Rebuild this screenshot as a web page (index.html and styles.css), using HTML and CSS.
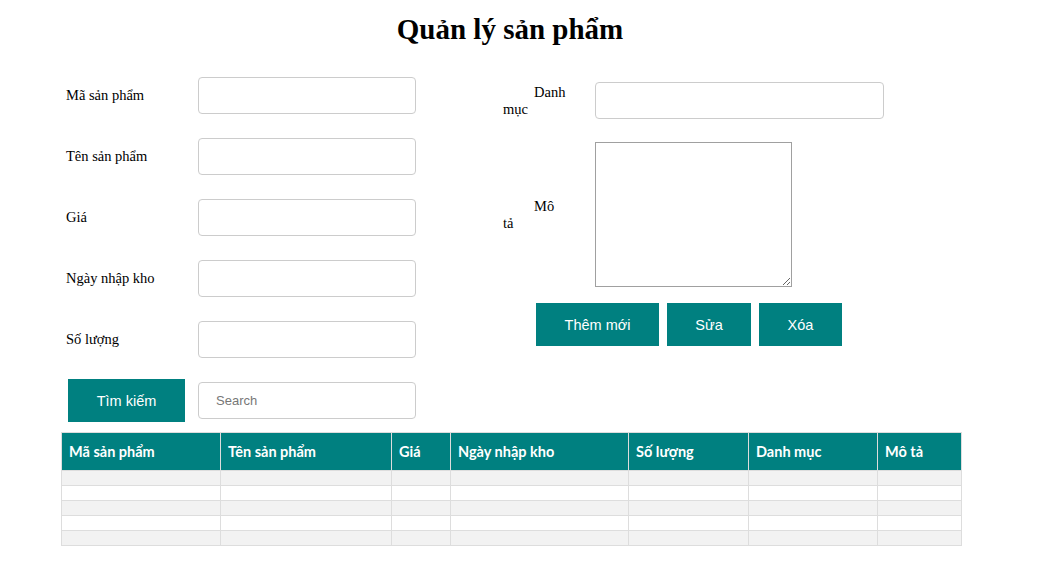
FILE: index.html
```html
<!DOCTYPE html>
<html lang="vi">
<head>
<meta charset="utf-8">
<title>Quản lý sản phẩm</title>
<link rel="stylesheet" href="styles.css">
</head>
<body>
<div class="page">
  <h1 class="title">Quản lý sản phẩm</h1>
  <div class="form">
    <div class="col-left">
      <div class="row"><label class="lbl">Mã sản phẩm</label><input class="field" type="text"></div>
      <div class="row"><label class="lbl">Tên sản phẩm</label><input class="field" type="text"></div>
      <div class="row"><label class="lbl">Giá</label><input class="field" type="text"></div>
      <div class="row"><label class="lbl">Ngày nhập kho</label><input class="field" type="text"></div>
      <div class="row"><label class="lbl">Số lượng</label><input class="field" type="text"></div>
      <div class="row"><div class="lbl"><button class="btn btn-search">Tìm kiếm</button></div><input class="field search" type="text" placeholder="Search"></div>
    </div>
    <div class="col-right">
      <div class="rrow"><label class="rlbl">Danh mục</label><input class="field wide" type="text"></div>
      <div class="rrow area-row"><label class="rlbl">Mô tả</label><textarea class="area"></textarea></div>
      <div class="actions">
        <button class="btn btn-add">Thêm mới</button>
        <button class="btn btn-edit">Sửa</button>
        <button class="btn btn-del">Xóa</button>
      </div>
    </div>
  </div>
  <table class="grid">
    <colgroup>
      <col class="c1"><col class="c2"><col class="c3"><col class="c4"><col class="c5"><col class="c6"><col class="c7">
    </colgroup>
    <thead>
      <tr><th>Mã sản phẩm</th><th>Tên sản phẩm</th><th>Giá</th><th>Ngày nhập kho</th><th>Số lượng</th><th>Danh mục</th><th>Mô tả</th></tr>
    </thead>
    <tbody>
      <tr><td></td><td></td><td></td><td></td><td></td><td></td><td></td></tr>
      <tr><td></td><td></td><td></td><td></td><td></td><td></td><td></td></tr>
      <tr><td></td><td></td><td></td><td></td><td></td><td></td><td></td></tr>
      <tr><td></td><td></td><td></td><td></td><td></td><td></td><td></td></tr>
      <tr><td></td><td></td><td></td><td></td><td></td><td></td><td></td></tr>
    </tbody>
  </table>
</div>
</body>
</html>
```

FILE: styles.css
```css
html, body {
  background: #fff;
}
body {
  margin: 8px;
  font-family: "Liberation Serif", "Times New Roman", serif;
  font-size: 14.5px;
  color: #000;
}
.page {
  width: 1004px;
}
.title {
  margin: 0;
  padding-top: 3px;
  text-align: center;
  font-size: 29px;
  font-weight: bold;
  line-height: 37px;
}
.form {
  display: flex;
  align-items: flex-start;
  margin-top: 29px;
  padding-left: 58px;
  gap: 87px;
}
.col-left {
  display: flex;
  flex-direction: column;
  gap: 24px;
}
.row {
  display: flex;
  align-items: center;
  height: 37px;
}
.lbl {
  width: 132px;
  flex: none;
}
.field {
  box-sizing: border-box;
  width: 218px;
  height: 37px;
  border: 1px solid #ccc;
  border-radius: 4px;
  padding: 0 17px;
  font-family: "Liberation Sans", Arial, sans-serif;
  font-size: 13px;
  outline: none;
  background: #fff;
}
.search::placeholder {
  color: #777;
}
.btn {
  height: 43px;
  padding: 0;
  border: none;
  background: #008080;
  color: #fff;
  font-family: "Liberation Sans", Arial, sans-serif;
  font-size: 14.5px;
  text-align: center;
  cursor: pointer;
}
.btn-search {
  width: 117px;
  margin-left: 2px;
}
.btn-add { width: 123px; }
.btn-edit { width: 84px; }
.btn-del { width: 83px; }
.col-right {
  display: flex;
  flex-direction: column;
  padding-top: 5px;
}
.rrow {
  display: flex;
  align-items: center;
}
.area-row {
  margin-top: 23px;
}
.rlbl {
  width: 60px;
  margin-right: 32px;
  text-indent: 31px;
  line-height: 17px;
  flex: none;
}
.wide {
  width: 289px;
}
.area {
  display: block;
  box-sizing: border-box;
  width: 197px;
  height: 145px;
  margin: 0;
  border: 1px solid #a0a0a0;
  padding: 2px;
}
.actions {
  display: flex;
  gap: 8px;
  margin-top: 16px;
  margin-left: 33px;
}
.grid {
  margin-top: 13px;
  margin-left: 53px;
  width: 900px;
  table-layout: fixed;
  border-collapse: collapse;
  border: 1px solid #ddd;
}
.c1 { width: 159px; }
.c2 { width: 171px; }
.c3 { width: 59px; }
.c4 { width: 178px; }
.c5 { width: 120px; }
.c6 { width: 129px; }
.c7 { width: 84px; }
.grid th {
  background: #008080;
  color: #fff;
  font-family: Lato, "Open Sans", sans-serif;
  font-weight: bold;
  font-size: 14.5px;
  line-height: 18px;
  text-align: left;
  padding: 10px 7px 9px;
  border: 1px solid #ddd;
  white-space: nowrap;
  overflow: hidden;
}
.grid td {
  padding: 7px 8px;
  border: 1px solid #ddd;
}
.grid tbody tr:nth-child(odd) {
  background: #f2f2f2;
}
.grid tbody tr:nth-child(even) {
  background: #fff;
}
```
